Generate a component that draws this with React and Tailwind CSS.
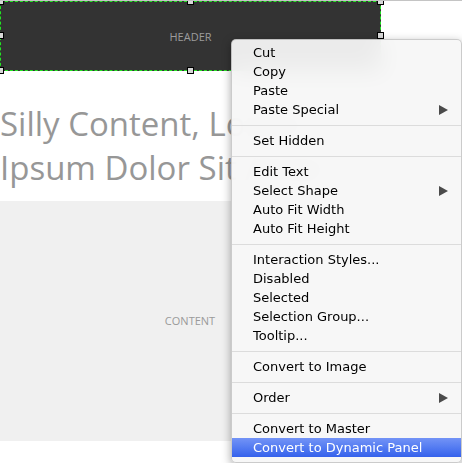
import React from "react";

const groups = [
  [["Cut"], ["Copy"], ["Paste"], ["Paste Special", true]],
  [["Set Hidden"]],
  [["Edit Text"], ["Select Shape", true], ["Auto Fit Width"], ["Auto Fit Height"]],
  [["Interaction Styles..."], ["Disabled"], ["Selected"], ["Selection Group..."], ["Tooltip..."]],
  [["Convert to Image"]],
  [["Order", true]],
  [["Convert to Master"], ["Convert to Dynamic Panel", false, true]],
];

function Handle({ className }) {
  return (
    <div
      className={
        "absolute w-[7px] h-[7px] border border-black bg-[#d8d8d8] " + className
      }
    />
  );
}

function Arrow({ white }) {
  return (
    <svg width="9" height="10" viewBox="0 0 9 10" className="shrink-0">
      <polygon points="0,0 9,5 0,10" fill={white ? "#fff" : "#4b4b4b"} />
    </svg>
  );
}

function Item({ label, sub, active }) {
  return (
    <div
      className={
        "flex items-center justify-between h-[19px] leading-[19px] pl-[21px] pr-[13px] whitespace-nowrap " +
        (active
          ? "bg-gradient-to-b from-[#7393f6] to-[#3561ec] text-white"
          : "text-black")
      }
    >
      <span>{label}</span>
      {sub && <Arrow white={active} />}
    </div>
  );
}

export default function App() {
  return (
    <div
      className="relative w-[462px] h-[463px] bg-white overflow-hidden border-t border-[#c4c4c4]"
      style={{ fontFamily: '"Open Sans", sans-serif' }}
    >
      <div className="relative w-[381px] h-[70px] bg-[#333333] border border-dashed border-[#22e622] flex items-center justify-center">
        <span className="text-[11px] text-[#9c9c9c] leading-none">HEADER</span>
        <Handle className="-left-[4px] -top-[4px]" />
        <Handle className="left-[186px] -top-[4px]" />
        <Handle className="-right-[4px] -top-[4px]" />
        <Handle className="-left-[4px] top-[30px]" />
        <Handle className="-right-[4px] top-[30px]" />
        <Handle className="-left-[4px] -bottom-[4px]" />
        <Handle className="left-[186px] -bottom-[4px]" />
        <Handle className="-right-[4px] -bottom-[4px]" />
      </div>

      <h1 className="mt-[31px] w-[380px] text-[33px] leading-[44px] text-[#979797] font-normal">
        Silly Content, Lorem Ipsum Dolor Sit Amet
      </h1>

      <div className="mt-[11px] w-[380px] h-[240px] bg-[#f0f0f0] flex items-center justify-center">
        <span className="text-[11px] text-[#9a9a9a]">CONTENT</span>
      </div>

      <div
        className="absolute left-[231px] top-[38px] w-[231px] h-[424px] rounded-[5px] bg-[rgba(247,247,247,0.94)] backdrop-blur-md border border-[rgba(0,0,0,0.18)] shadow-[0_3px_10px_rgba(0,0,0,0.35)] pt-[3px] pb-[4px] overflow-hidden text-[13px] flex flex-col"
        style={{ fontFamily: '"DejaVu Sans", sans-serif' }}
      >
        {groups.map((g, gi) => (
          <React.Fragment key={gi}>
            {gi > 0 && (
              <div className="h-[12px] flex items-center">
                <div className="w-full h-px bg-[#dcdcdc]" />
              </div>
            )}
            {g.map(([label, sub, active]) => (
              <Item key={label} label={label} sub={sub} active={active} />
            ))}
          </React.Fragment>
        ))}
      </div>
    </div>
  );
}
